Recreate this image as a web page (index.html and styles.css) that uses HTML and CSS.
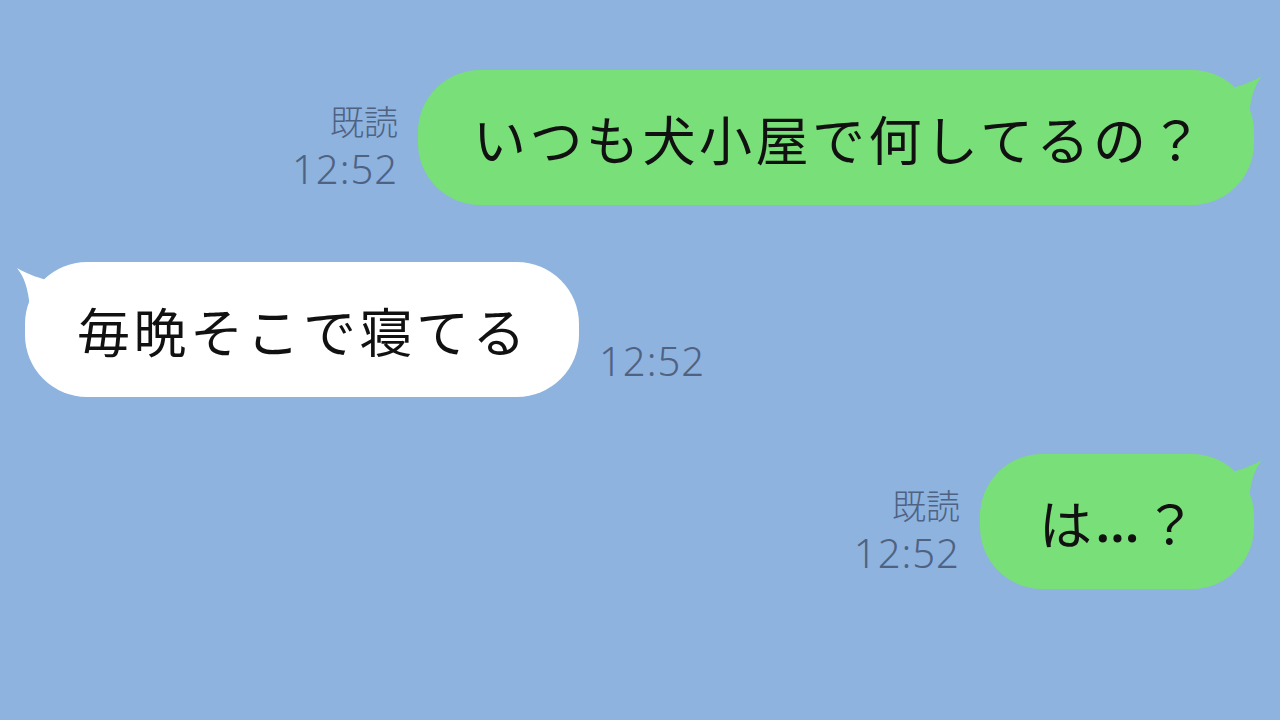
FILE: index.html
```html
<!DOCTYPE html>
<html lang="ja">
<head>
<meta charset="utf-8">
<title>chat</title>
<link rel="stylesheet" href="styles.css">
</head>
<body>
<div class="chat">
  <div class="row mine">
    <div class="meta"><span class="read">既読</span><span class="time">12:52</span></div>
    <div class="bubble green long">いつも犬小屋で何してるの？
      <svg class="tail tail-r" viewBox="0 0 40 46" width="40" height="46"><path d="M0 20 C14 17 28 12 38 6 C31 15 27 25 25 46 L0 46 Z" fill="#79df78"/></svg>
    </div>
  </div>
  <div class="row theirs">
    <div class="bubble white">毎晩そこで寝てる
      <svg class="tail tail-l" viewBox="0 0 40 46" width="40" height="46"><path d="M40 20 C26 17 12 12 2 6 C9 15 13 25 15 46 L40 46 Z" fill="#ffffff"/></svg>
    </div>
    <div class="meta left"><span class="time">12:52</span></div>
  </div>
  <div class="row mine">
    <div class="meta"><span class="read">既読</span><span class="time">12:52</span></div>
    <div class="bubble green short">は<span class="ell">…</span>？
      <svg class="tail tail-r" viewBox="0 0 40 46" width="40" height="46"><path d="M0 20 C14 17 28 12 38 6 C31 15 27 25 25 46 L0 46 Z" fill="#79df78"/></svg>
    </div>
  </div>
</div>
</body>
</html>
```

FILE: styles.css
```css
html, body {
  margin: 0;
  padding: 0;
}
body {
  width: 1280px;
  height: 720px;
  overflow: hidden;
  background: #8eb3df;
  font-family: "Noto Sans CJK JP", "Noto Sans", sans-serif;
}
.chat {
  display: flex;
  flex-direction: column;
  gap: 57px;
  padding-top: 70px;
}
.row {
  display: flex;
  align-items: flex-end;
}
.row.mine {
  justify-content: flex-end;
  padding-right: 26px;
  gap: 20px;
}
.row.theirs {
  justify-content: flex-start;
  padding-left: 25px;
  gap: 20px;
}
.bubble {
  position: relative;
  height: 135px;
  box-sizing: border-box;
  display: flex;
  align-items: center;
  border-radius: 62px;
  font-size: 53px;
  letter-spacing: 3.5px;
  color: #111111;
  white-space: nowrap;
}
.bubble.long {
  padding: 0 48px 0 55px;
}
.bubble.short {
  padding: 0 54px 0 59px;
}
.bubble.white {
  padding: 0 50px 0 52px;
}
.green {
  background: #79df78;
}
.white {
  background: #ffffff;
}
.ell {
  font-family: "Noto Sans", sans-serif;
  font-weight: 600;
  letter-spacing: 4px;
}
.tail {
  position: absolute;
  top: 0;
}
.tail-r {
  right: -10px;
}
.tail-l {
  left: -10px;
}
.meta {
  display: flex;
  flex-direction: column;
  align-items: flex-end;
  margin-bottom: 13px;
  color: #4f6282;
}
.meta.left {
  align-items: flex-start;
}
.read {
  font-family: "Noto Sans CJK JP", sans-serif;
  font-weight: 300;
  font-size: 34px;
  line-height: 42px;
  margin-bottom: 4px;
}
.time {
  font-family: "Noto Sans", sans-serif;
  font-weight: 300;
  font-size: 40px;
  line-height: 46px;
  letter-spacing: 1px;
}
```
